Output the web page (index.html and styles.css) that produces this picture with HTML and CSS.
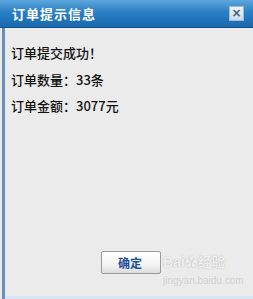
FILE: index.html
```html
<!DOCTYPE html>
<html>
<head>
<meta charset="utf-8">
<link rel="stylesheet" href="styles.css">
</head>
<body>
<div class="dialog">
  <div class="titlebar">
    <span class="title">订单提示信息</span>
    <span class="close">×</span>
  </div>
  <div class="content">
    <p class="line">订单提交成功！</p>
    <p class="line">订单数量：33条</p>
    <p class="line">订单金额：3077元</p>
    <div class="actions">
      <button class="ok">确定</button>
    </div>
    <div class="watermark">Bai<span class="paw">✿</span>经验<br><small>jingyan.baidu.com</small></div>
  </div>
</div>
</body>
</html>
```
FILE: styles.css
```css
html, body {
  margin: 0;
  padding: 0;
  background: #e9eaec;
}
.dialog {
  width: 253px;
  height: 299px;
  display: flex;
  flex-direction: column;
  font-family: "Noto Sans CJK SC", "Liberation Sans", sans-serif;
  box-sizing: border-box;
}
.titlebar {
  height: 27px;
  flex: none;
  display: flex;
  align-items: center;
  justify-content: space-between;
  padding: 0 9px 0 12px;
  background: linear-gradient(180deg, #5ea6dc 0%, #2a7fc4 45%, #1a68ae 100%);
  border-bottom: 1px solid #0f4f8c;
}
.title {
  color: #ffffff;
  font-size: 13px;
  font-weight: bold;
  letter-spacing: 1px;
}
.close {
  width: 15px;
  height: 15px;
  background: linear-gradient(180deg, #eef4fa, #c9dbee);
  border: 1px solid #9fb9d6;
  box-sizing: border-box;
  color: #4a5a70;
  font-size: 12px;
  font-weight: bold;
  line-height: 12px;
  text-align: center;
  font-family: "DejaVu Sans", sans-serif;
}
.content {
  position: relative;
  flex: 1;
  background: #ebebeb;
  border-left: 3px solid #6d8fb3;
  margin-left: 2px;
  box-shadow: inset 1px 0 0 #dfe9f4, inset 0 -3px 0 #d6e6f6;
  padding: 15px 0 0 6px;
  display: flex;
  flex-direction: column;
}
.line {
  margin: 0 0 7.5px 0;
  font-size: 13px;
  line-height: 19px;
  color: #111;
  font-weight: 500;
}
.actions {
  margin-top: auto;
  margin-bottom: 25px;
  padding-left: 90px;
}
.ok {
  width: 60px;
  height: 23px;
  border: 1px solid #9a9a9a;
  border-radius: 2px;
  background: linear-gradient(180deg, #ffffff 0%, #f4f4f4 60%, #dcdcdc 100%);
  color: #1f4e9c;
  font-weight: bold;
  font-size: 12px;
  font-family: "Noto Sans CJK SC", sans-serif;
  padding: 0;
  text-align: left;
  padding-left: 16px;
}
.watermark {
  position: absolute;
  left: 158px;
  top: 226px;
  color: rgba(255,255,255,0.85);
  text-shadow: 0 0 1px #9a9a9a;
  font-size: 14px;
  font-weight: bold;
  line-height: 16px;
  font-family: "Liberation Sans", "Noto Sans CJK SC", sans-serif;
}
.watermark small {
  font-size: 10px;
  font-weight: normal;
  color: rgba(205,205,205,0.9);
  text-shadow: none;
}
.paw {
  font-size: 13px;
}
```
